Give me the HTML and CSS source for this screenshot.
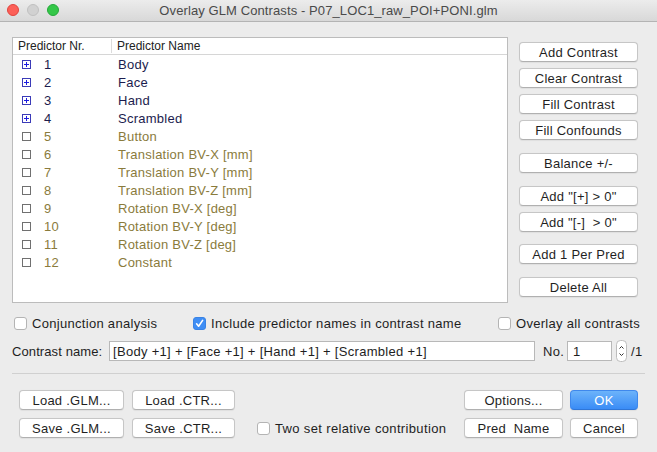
FILE: index.html
```html
<!DOCTYPE html>
<html>
<head>
<meta charset="utf-8">
<title>Overlay GLM Contrasts</title>
<link rel="stylesheet" href="styles.css">
</head>
<body>
<div class="window">
  <div class="titlebar">
    <div class="lights"><span class="light red"></span><span class="light grey"></span><span class="light green"></span></div>
    <div class="title">Overlay GLM Contrasts - P07_LOC1_raw_POI+PONI.glm</div>
  </div>

  <div class="main">
    <div class="list">
      <div class="list-head"><div class="col-nr">Predictor Nr.</div><div class="col-name">Predictor Name</div></div>
      <div class="row on"><svg class="mark" width="9" height="9" viewBox="0 0 9 9"><rect x="0.5" y="0.5" width="8" height="8" fill="#fff" stroke="#3b3bb8"/><path d="M2 4.5H7M4.5 2V7" stroke="#1c1ce0" stroke-width="1"/></svg><span class="nr">1</span><span class="name">Body</span></div>
      <div class="row on"><svg class="mark" width="9" height="9" viewBox="0 0 9 9"><rect x="0.5" y="0.5" width="8" height="8" fill="#fff" stroke="#3b3bb8"/><path d="M2 4.5H7M4.5 2V7" stroke="#1c1ce0" stroke-width="1"/></svg><span class="nr">2</span><span class="name">Face</span></div>
      <div class="row on"><svg class="mark" width="9" height="9" viewBox="0 0 9 9"><rect x="0.5" y="0.5" width="8" height="8" fill="#fff" stroke="#3b3bb8"/><path d="M2 4.5H7M4.5 2V7" stroke="#1c1ce0" stroke-width="1"/></svg><span class="nr">3</span><span class="name">Hand</span></div>
      <div class="row on"><svg class="mark" width="9" height="9" viewBox="0 0 9 9"><rect x="0.5" y="0.5" width="8" height="8" fill="#fff" stroke="#3b3bb8"/><path d="M2 4.5H7M4.5 2V7" stroke="#1c1ce0" stroke-width="1"/></svg><span class="nr">4</span><span class="name">Scrambled</span></div>
      <div class="row off"><svg class="mark" width="9" height="9" viewBox="0 0 9 9"><rect x="0.5" y="0.5" width="8" height="8" fill="#fff" stroke="#707070"/></svg><span class="nr">5</span><span class="name">Button</span></div>
      <div class="row off"><svg class="mark" width="9" height="9" viewBox="0 0 9 9"><rect x="0.5" y="0.5" width="8" height="8" fill="#fff" stroke="#707070"/></svg><span class="nr">6</span><span class="name">Translation BV-X [mm]</span></div>
      <div class="row off"><svg class="mark" width="9" height="9" viewBox="0 0 9 9"><rect x="0.5" y="0.5" width="8" height="8" fill="#fff" stroke="#707070"/></svg><span class="nr">7</span><span class="name">Translation BV-Y [mm]</span></div>
      <div class="row off"><svg class="mark" width="9" height="9" viewBox="0 0 9 9"><rect x="0.5" y="0.5" width="8" height="8" fill="#fff" stroke="#707070"/></svg><span class="nr">8</span><span class="name">Translation BV-Z [mm]</span></div>
      <div class="row off"><svg class="mark" width="9" height="9" viewBox="0 0 9 9"><rect x="0.5" y="0.5" width="8" height="8" fill="#fff" stroke="#707070"/></svg><span class="nr">9</span><span class="name">Rotation BV-X [deg]</span></div>
      <div class="row off"><svg class="mark" width="9" height="9" viewBox="0 0 9 9"><rect x="0.5" y="0.5" width="8" height="8" fill="#fff" stroke="#707070"/></svg><span class="nr">10</span><span class="name">Rotation BV-Y [deg]</span></div>
      <div class="row off"><svg class="mark" width="9" height="9" viewBox="0 0 9 9"><rect x="0.5" y="0.5" width="8" height="8" fill="#fff" stroke="#707070"/></svg><span class="nr">11</span><span class="name">Rotation BV-Z [deg]</span></div>
      <div class="row off"><svg class="mark" width="9" height="9" viewBox="0 0 9 9"><rect x="0.5" y="0.5" width="8" height="8" fill="#fff" stroke="#707070"/></svg><span class="nr">12</span><span class="name">Constant</span></div>
    </div>

    <div class="side">
      <div class="btn">Add Contrast</div>
      <div class="btn g6">Clear Contrast</div>
      <div class="btn g6">Fill Contrast</div>
      <div class="btn g6">Fill Confounds</div>
      <div class="btn g13">Balance +/-</div>
      <div class="btn g13">Add "[+] &gt; 0"</div>
      <div class="btn g6">Add "[-]  &gt; 0"</div>
      <div class="btn g12">Add 1 Per Pred</div>
      <div class="btn g13">Delete All</div>
    </div>
  </div>

  <div class="opts">
    <label class="opt opt1"><span class="cbox"></span><span>Conjunction analysis</span></label>
    <label class="opt opt2"><span class="cbox checked"><svg width="11" height="11" viewBox="0 0 11 11"><path d="M2.6 5.8L4.6 8.2L8.6 2.4" fill="none" stroke="#fff" stroke-width="1.6" stroke-linecap="round" stroke-linejoin="round"/></svg></span><span>Include predictor names in contrast name</span></label>
    <label class="opt opt3"><span class="cbox"></span><span>Overlay all contrasts</span></label>
  </div>

  <div class="crow">
    <span class="clabel">Contrast name:</span>
    <div class="field cname">[Body +1] + [Face +1] + [Hand +1] + [Scrambled +1]</div>
    <span class="nolabel">No.</span>
    <div class="field num">1</div>
    <div class="spin"><svg width="11" height="22" viewBox="0 0 11 22"><rect x="0.5" y="0.5" width="10" height="21" rx="4" fill="#fff" stroke="#bdbdbd"/><path d="M3.5 8.5L5.5 6.5L7.5 8.5M3.5 13.5L5.5 15.5L7.5 13.5" fill="none" stroke="#333" stroke-width="1"/></svg></div>
    <span class="total">/1</span>
  </div>

  <div class="sep"></div>

  <div class="bottom">
    <div class="bgrid">
      <div class="btn">Load .GLM...</div>
      <div class="btn">Load .CTR...</div>
      <div class="btn">Save .GLM...</div>
      <div class="btn">Save .CTR...</div>
    </div>
    <label class="opt two"><span class="cbox"></span><span>Two set relative contribution</span></label>
    <div class="rgrid">
      <div class="btn">Options...</div>
      <div class="btn ok">OK</div>
      <div class="btn">Pred  Name</div>
      <div class="btn">Cancel</div>
    </div>
  </div>
</div>
</body>
</html>
```

FILE: styles.css
```css
* { box-sizing: border-box; }
html, body { margin: 0; padding: 0; }
body {
  width: 657px;
  height: 452px;
  overflow: hidden;
  background: #ececec;
  font-family: "Liberation Sans", Arial, sans-serif;
  font-size: 13px;
  color: #1e1e1e;
}
.window {
  width: 657px;
  height: 452px;
  display: flex;
  flex-direction: column;
}

/* title bar */
.titlebar {
  position: relative;
  height: 22px;
  flex: none;
  background: linear-gradient(#ececec, #d8d8d8);
  border-bottom: 1px solid #b4b4b4;
  display: flex;
  align-items: center;
}
.lights {
  position: absolute;
  left: 7px;
  top: 4px;
  display: flex;
  gap: 8px;
}
.light {
  width: 12px;
  height: 12px;
  border-radius: 50%;
}
.light.red { background: #fc5f57; border: 1px solid #e0443e; }
.light.grey { background: #d1d1d1; border: 1px solid #c0c0c0; }
.light.green { background: #34c748; border: 1px solid #25a93a; }
.title {
  width: 100%;
  text-align: center;
  color: #4a4a4a;
  font-size: 13px;
  letter-spacing: 0.1px;
}

/* main area */
.main {
  display: flex;
  padding: 15px 0 0 12px;
  flex: none;
}
.list {
  width: 496px;
  height: 266px;
  background: #fff;
  border: 1px solid #bcbcbc;
}
.list-head {
  display: flex;
  height: 17px;
  align-items: center;
  border-bottom: 1px solid #d6d6d6;
  font-size: 12px;
  color: #222;
}
.col-nr {
  width: 99px;
  padding-left: 5px;
  border-right: 1px solid #dcdcdc;
  line-height: 14px;
}
.col-name { padding-left: 5px; }
.row {
  display: flex;
  align-items: center;
  height: 18px;
  padding-left: 9px;
  font-size: 13px;
  letter-spacing: 0.25px;
}
.row .mark { flex: none; }
.row .nr { margin-left: 13px; width: 74px; }
.row.on { color: #1c1c4e; }
.row.off { color: #8a7b3c; }

.side {
  margin-left: 11px;
  width: 119px;
  padding-top: 5px;
  display: flex;
  flex-direction: column;
}
.btn {
  height: 20px;
  background: #fff;
  border: 1px solid #c6c6c6;
  border-bottom-color: #b0b0b0;
  border-radius: 4px;
  display: flex;
  align-items: center;
  justify-content: center;
  white-space: pre;
  font-size: 13px;
  color: #1f1f1f;
  letter-spacing: 0.25px;
  box-shadow: 0 0.5px 1px rgba(0, 0, 0, 0.06);
}
.g6 { margin-top: 6px; }
.g12 { margin-top: 12px; }
.g13 { margin-top: 13px; }

/* options row */
.opts {
  display: flex;
  align-items: center;
  height: 17px;
  margin-top: 12px;
  padding-left: 14px;
  flex: none;
}
.opt {
  display: flex;
  align-items: center;
  gap: 5px;
  white-space: nowrap;
  letter-spacing: 0.3px;
}
.opt1 { width: 179px; }
.opt2 { width: 305px; }
.cbox {
  width: 13px;
  height: 13px;
  flex: none;
  background: #fff;
  border: 1px solid #b4b4b4;
  border-radius: 3px;
  display: flex;
  align-items: center;
  justify-content: center;
}
.cbox.checked {
  background: #3f8ef5;
  border-color: #3a83e4;
}

/* contrast name row */
.crow {
  display: flex;
  align-items: center;
  height: 22px;
  margin-top: 8px;
  padding-left: 12px;
  flex: none;
  letter-spacing: 0.3px;
}
.clabel { width: 97px; letter-spacing: 0.1px; }
.field {
  height: 20px;
  background: #fff;
  border: 1px solid #b8b8b8;
  display: flex;
  align-items: center;
  padding-left: 3px;
  white-space: nowrap;
}
.cname { width: 426px; }
.nolabel { margin-left: 8px; width: 24px; }
.num { width: 45px; padding-left: 5px; }
.spin { margin-left: 4px; width: 11px; height: 22px; }
.spin svg { display: block; }
.total { margin-left: 4px; }

.sep {
  flex: none;
  height: 1px;
  margin: 11px 12px 0 12px;
  background: #d0d0d0;
}

/* bottom */
.bottom {
  display: flex;
  margin-top: 16px;
  padding: 0 19px;
}
.bgrid {
  display: grid;
  grid-template-columns: 105px 103px;
  column-gap: 8px;
  row-gap: 8px;
}
.two {
  align-self: flex-end;
  height: 20px;
  margin-left: 22px;
  letter-spacing: 0.35px;
}
.rgrid {
  margin-left: auto;
  display: grid;
  grid-template-columns: 99px 68px;
  column-gap: 7px;
  row-gap: 8px;
}
.btn.ok {
  background: linear-gradient(#6cb3fa, #3a8cf6);
  border-color: #3f88ec;
  border-bottom-color: #2f76d8;
  color: #fff;
}
```
